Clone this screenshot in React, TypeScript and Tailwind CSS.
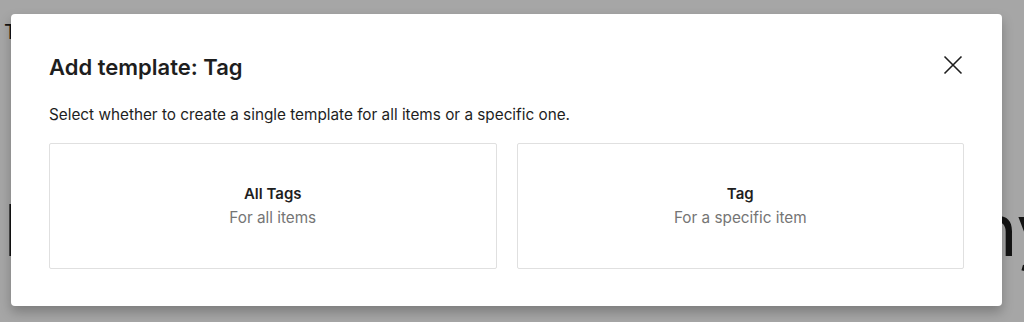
import React from "react";

export default function App() {
  return (
    <div
      className="relative w-[1024px] h-[322px] overflow-hidden bg-white text-[#1e1e1e]"
      style={{ fontFamily: "Inter, 'Noto Sans', sans-serif" }}
    >
      {/* page behind the dialog */}
      <div className="flex flex-col pl-[4px] pt-[20px]">
        <div className="text-[20px] leading-[24px] font-normal">T</div>
        <div className="flex justify-between items-start mt-[146px] -ml-[1px] -mr-[33px] text-[72px] leading-[80px] font-normal">
          <span>I</span>
          <span>ny</span>
        </div>
      </div>

      {/* overlay */}
      <div className="absolute inset-0 bg-black/35" />

      {/* dialog */}
      <div className="absolute left-[11px] top-[14px] w-[991px] h-[292px] bg-white rounded-[4px] shadow-[0_6px_12px_rgba(0,0,0,0.25)] px-[38px] pt-[39px]">
        <div className="flex items-center justify-between h-[28px]">
          <h1 className="text-[22px] leading-[28px] font-semibold text-[#1e1e1e]">
            Add template: Tag
          </h1>
          <button className="w-[24px] h-[24px] flex items-center justify-center mr-[-1px] -mt-[4px]">
            <svg width="24" height="24" viewBox="0 0 24 24" fill="none">
              <path
                d="M3.5 3.5 L20.5 20.5 M20.5 3.5 L3.5 20.5"
                stroke="#1e1e1e"
                strokeWidth="1.6"
              />
            </svg>
          </button>
        </div>
        <p className="mt-[24px] text-[15.3px] leading-[20px] text-[#1e1e1e]">
          Select whether to create a single template for all items or a specific one.
        </p>
        <div className="mt-[18px] grid grid-cols-2 gap-[20px]">
          <div className="h-[126px] border border-[#e0e0e0] rounded-[2px] flex flex-col items-center justify-center">
            <div className="text-[15px] leading-[20px] font-semibold text-[#1e1e1e]">All Tags</div>
            <div className="text-[15.3px] leading-[20px] text-[#757575] mt-[4px]">For all items</div>
          </div>
          <div className="h-[126px] border border-[#e0e0e0] rounded-[2px] flex flex-col items-center justify-center">
            <div className="text-[15px] leading-[20px] font-semibold text-[#1e1e1e]">Tag</div>
            <div className="text-[15.3px] leading-[20px] text-[#757575] mt-[4px]">For a specific item</div>
          </div>
        </div>
      </div>
    </div>
  );
}
